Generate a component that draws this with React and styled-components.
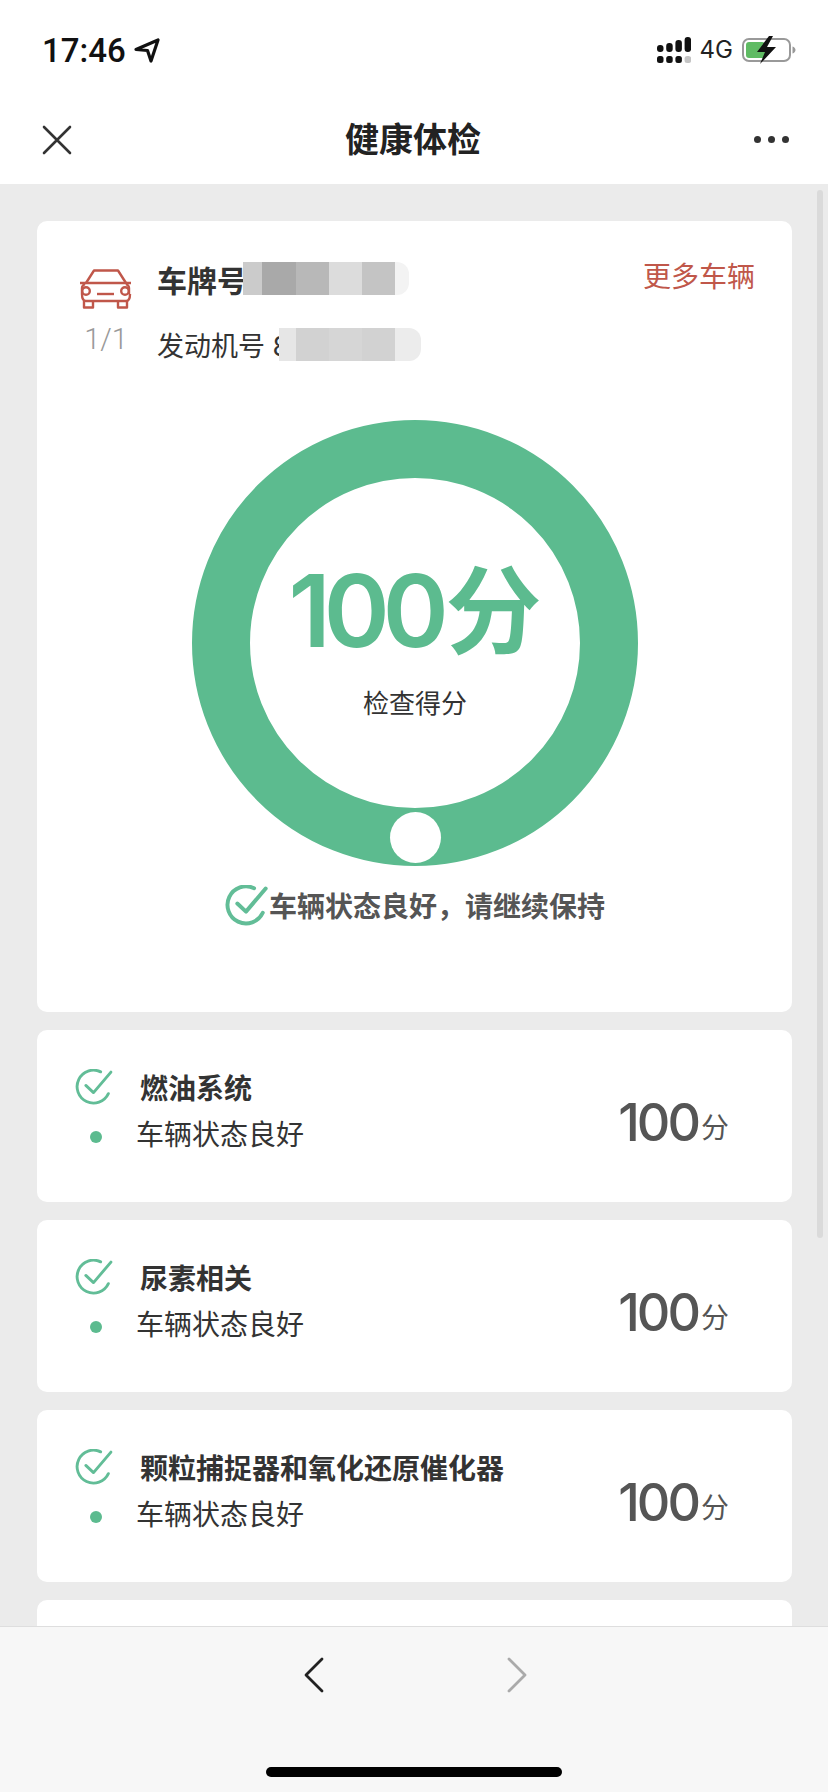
import React from 'react';
import styled, { createGlobalStyle } from 'styled-components';

const GlobalStyle = createGlobalStyle`
  html, body {
    margin: 0;
    padding: 0;
    background: #fff;
  }
  body {
    font-family: Inter, "Noto Sans CJK SC", sans-serif;
  }
`;

const GREEN = '#5cbb8f';
const RED = '#c0574a';

const Page = styled.div`
  width: 828px;
  height: 1792px;
  display: flex;
  flex-direction: column;
  overflow: hidden;
`;

// Статус-бар
const StatusBar = styled.div`
  height: 100px;
  flex: none;
  box-sizing: border-box;
  padding: 0 32px 0 42px;
  display: flex;
  align-items: center;
  justify-content: space-between;
`;

const TimeGroup = styled.div`
  display: flex;
  align-items: center;
  gap: 8px;
`;

const Time = styled.span`
  font-family: Roboto, sans-serif;
  font-size: 33px;
  font-weight: 500;
  line-height: 1;
  color: #111;
`;

const StatusIcons = styled.div`
  display: flex;
  align-items: center;
  gap: 9px;
`;

const NetworkLabel = styled.span`
  font-family: Inter, sans-serif;
  font-size: 24px;
  line-height: 1;
  color: #222;
`;

// Навигация
const NavBar = styled.div`
  height: 84px;
  flex: none;
  box-sizing: border-box;
  padding: 0 39px 5px 42px;
  display: flex;
  align-items: center;
  justify-content: space-between;
`;

const NavTitle = styled.h1`
  margin: -4px 0 0;
  font-size: 34px;
  font-weight: 700;
  color: #222;
`;

const MoreDots = styled.div`
  display: flex;
  gap: 7px;
  i {
    width: 7px;
    height: 7px;
    border-radius: 50%;
    background: #333;
  }
`;

// Контент
const Content = styled.div`
  flex: 1;
  min-height: 0;
  position: relative;
  overflow: hidden;
  background: #ebebeb;
  box-sizing: border-box;
  padding: 37px 36px 0 37px;
  display: flex;
  flex-direction: column;
  gap: 18px;
`;

const ScrollThumb = styled.div`
  position: absolute;
  top: 6px;
  right: 5px;
  width: 6px;
  height: 1048px;
  border-radius: 3px;
  background: #dadada;
`;

const SummaryCard = styled.section`
  flex: none;
  height: 791px;
  border-radius: 10px;
  background: #fff;
  box-sizing: border-box;
  padding: 41px 37px 0 43px;
  display: flex;
  flex-direction: column;
`;

const VehicleHead = styled.div`
  display: flex;
  align-items: flex-start;
`;

const VehicleSide = styled.div`
  width: 77px;
  flex: none;
  padding-top: 7px;
  display: flex;
  flex-direction: column;
  gap: 16px;
`;

const PageCount = styled.span`
  width: 52px;
  text-align: center;
  font-family: Roboto, sans-serif;
  font-size: 29px;
  font-weight: 300;
  line-height: 28px;
  color: #999;
`;

const VehicleInfo = styled.div`
  flex: 1;
  display: flex;
  flex-direction: column;
  gap: 33px;
`;

const InfoLine = styled.div`
  height: 33px;
  display: flex;
  align-items: center;
`;

const PlateLabel = styled.span`
  font-size: 30px;
  font-weight: 700;
  color: #333;
  white-space: nowrap;
`;

const EngineLabel = styled.span`
  font-size: 27px;
  color: #333;
  white-space: nowrap;
`;

const Mask = styled.div`
  display: flex;
  height: 33px;
  margin-left: ${(p) => p.$shift}px;
`;

const MaskCell = styled.div`
  height: 100%;
  width: ${(p) => p.$w}px;
  background: ${(p) => p.$c};
  &:last-child {
    border-radius: 0 12px 12px 0;
  }
`;

const MoreLink = styled.a`
  flex: none;
  font-size: 28px;
  line-height: 30px;
  color: ${RED};
`;

const GaugeWrap = styled.div`
  margin: 59px 0 0 112px;
  width: 446px;
  height: 446px;
  position: relative;
  box-sizing: border-box;
  border: 58px solid ${GREEN};
  border-radius: 50%;
  display: flex;
  flex-direction: column;
  align-items: center;
`;

const GaugeKnob = styled.div`
  position: absolute;
  left: 50%;
  bottom: -55px;
  width: 51px;
  height: 51px;
  margin-left: -25.5px;
  border-radius: 50%;
  background: #fff;
`;

const Score = styled.div`
  margin-top: 85px;
  display: flex;
  align-items: center;
  height: 96px;
  color: ${GREEN};
  font-weight: 700;
`;

const ScoreNumber = styled.span`
  font-family: Inter, sans-serif;
  font-size: 100px;
  font-weight: 600;
  letter-spacing: -7px;
  line-height: 1;
`;

const ScoreUnit = styled.span`
  font-size: 96px;
  line-height: 1;
  margin-left: 4px;
`;

const ScoreCaption = styled.div`
  margin-top: 27px;
  font-size: 26px;
  line-height: 36px;
  color: #333;
`;

const Verdict = styled.div`
  margin: 19px 0 0 144px;
  display: flex;
  align-items: center;
  gap: 1px;
  font-size: 28px;
  font-weight: 700;
  color: #555;
`;

const ItemCard = styled.section`
  flex: none;
  height: 172px;
  border-radius: 10px;
  background: #fff;
  box-sizing: border-box;
  padding: 34px 63px 0 37px;
  display: flex;
  justify-content: space-between;
`;

const ItemBody = styled.div`
  display: grid;
  grid-template-columns: 62px auto;
  grid-auto-rows: 46px;
  align-items: center;
`;

const ItemTitle = styled.div`
  margin-left: 4px;
  font-size: 28px;
  font-weight: 700;
  color: #333;
  white-space: nowrap;
`;

const ItemDot = styled.i`
  display: block;
  margin: 8px 0 0 16px;
  width: 12px;
  height: 12px;
  border-radius: 50%;
  background: ${GREEN};
`;

const ItemText = styled.div`
  font-size: 28px;
  color: #333;
  white-space: nowrap;
`;

const ItemScore = styled.div`
  display: flex;
  align-items: flex-end;
  gap: 3px;
  margin-top: 34px;
  height: 50px;
  color: #555;
`;

const ItemNumber = styled.span`
  font-family: Inter, sans-serif;
  font-size: 52px;
  font-weight: 500;
  letter-spacing: -3px;
  line-height: 50px;
`;

const ItemUnit = styled.span`
  font-size: 28px;
  line-height: 40px;
`;

// Нижняя панель
const Footer = styled.footer`
  height: 166px;
  flex: none;
  background: #f7f7f7;
  border-top: 1px solid #dedede;
  box-sizing: border-box;
  display: flex;
  flex-direction: column;
  align-items: center;
`;

const FooterNav = styled.div`
  margin-top: 30px;
  margin-left: 2px;
  display: flex;
  gap: 183px;
`;

const HomeBar = styled.div`
  margin-top: 74px;
  width: 296px;
  height: 10px;
  border-radius: 5px;
  background: #000;
`;

const LocationIcon = () => (
  <svg width="26" height="25" viewBox="0 0 26 25" fill="none">
    <path d="M2 11.5 24 2 17 23 13.5 12.5Z" stroke="#111" strokeWidth="3.2" strokeLinejoin="round" />
  </svg>
);

const SignalIcon = () => {
  const tops = [8, 6, 3, 0];
  return (
    <svg width="34" height="26" viewBox="0 0 34 26">
      {tops.map((top, i) => (
        <g key={i}>
          <rect x={i * 9.2} y={top} width="6.5" height={15 - top} rx="3" fill="#111" />
          <rect x={i * 9.2} y="19" width="6.5" height="7" rx="2.5" fill={i === 3 ? '#c4c4c4' : '#111'} />
        </g>
      ))}
    </svg>
  );
};

const BatteryIcon = () => (
  <svg width="54" height="28" viewBox="0 0 54 28" fill="none">
    <rect x="1" y="3" width="47" height="22" rx="6" stroke="#999" strokeWidth="2" />
    <rect x="4" y="6" width="19" height="16" rx="3" fill="#5fbb63" />
    <path d="M50.500 10.500c2 .6 3 2 3 3.500s-1 2.900-3 3.500Z" fill="#999" />
    <path d="M27 0 15 16h8l-5 12 16-17h-9l6-11Z" fill="#111" />
  </svg>
);

const CloseIcon = () => (
  <svg width="30" height="30" viewBox="0 0 30 30" fill="none">
    <path d="M2 2 28 28M28 2 2 28" stroke="#333" strokeWidth="2.600" strokeLinecap="round" />
  </svg>
);

const CarIcon = () => (
  <svg width="52" height="40" viewBox="0 0 52 40" fill="none" stroke={RED} strokeWidth="2.400" strokeLinejoin="round">
    <path d="M6 14 14 1.500H38L46 14" />
    <path d="M0 14H51" />
    <path d="M2 25V19c0-1.500 1-3 3-4M49 25V19c0-1.500-1-3-3-4M2 25c0 4 1 7 4 7H46c3 0 4-3 4-7" />
    <circle cx="6" cy="22" r="3.800" />
    <circle cx="45" cy="22" r="3.800" />
    <path d="M17 25H34" />
    <path d="M4 32V38.500H13V32M38 32V38.500H47V32" />
  </svg>
);

const CheckIcon = ({ size, weight }) => (
  <svg width={size} height={(size * 35) / 38} viewBox="0 0 38 35" fill="none" stroke="#62bd97" strokeWidth={weight} strokeLinecap="round" strokeLinejoin="round">
    <path d="M26 2.800A16 16 0 1 0 33.500 24" />
    <path d="M11.500 16 19 23 36 3" />
  </svg>
);

const ChevronIcon = ({ color, flip }) => (
  <svg width="20" height="36" viewBox="0 0 20 36" fill="none">
    <path d={flip ? 'M2 2 18 18 2 34' : 'M18 2 2 18 18 34'} stroke={color} strokeWidth="2.800" strokeLinecap="round" strokeLinejoin="round" />
  </svg>
);

const plateCells = [
  [19, '#cbcbcb'], [34, '#a9a9a9'], [33, '#b8b8b8'], [33, '#dcdcdc'], [33, '#c4c4c4'], [14, '#f3f3f3'],
];
const engineCells = [
  [17, '#e6e6e6'], [33, '#d2d2d2'], [33, '#d6d6d6'], [33, '#d2d2d2'], [26, '#ececec'],
];

const items = ['燃油系统', '尿素相关', '颗粒捕捉器和氧化还原催化器'];

const App = () => {
  return (
    <Page>
      <GlobalStyle />
      <StatusBar>
        <TimeGroup>
          <Time>17:46</Time>
          <LocationIcon />
        </TimeGroup>
        <StatusIcons>
          <SignalIcon />
          <NetworkLabel>4G</NetworkLabel>
          <BatteryIcon />
        </StatusIcons>
      </StatusBar>

      <NavBar>
        <CloseIcon />
        <NavTitle>健康体检</NavTitle>
        <MoreDots>
          <i />
          <i />
          <i />
        </MoreDots>
      </NavBar>

      <Content>
        <ScrollThumb />
        <SummaryCard>
          <VehicleHead>
            <VehicleSide>
              <CarIcon />
              <PageCount>1/1</PageCount>
            </VehicleSide>
            <VehicleInfo>
              <InfoLine>
                <PlateLabel>车牌号</PlateLabel>
                <Mask $shift={-4}>
                  {plateCells.map(([w, c], i) => (
                    <MaskCell key={i} $w={w} $c={c} />
                  ))}
                </Mask>
              </InfoLine>
              <InfoLine>
                <EngineLabel>发动机号 8</EngineLabel>
                <Mask $shift={-10}>
                  {engineCells.map(([w, c], i) => (
                    <MaskCell key={i} $w={w} $c={c} />
                  ))}
                </Mask>
              </InfoLine>
            </VehicleInfo>
            <MoreLink>更多车辆</MoreLink>
          </VehicleHead>

          <GaugeWrap>
            <Score>
              <ScoreNumber>100</ScoreNumber>
              <ScoreUnit>分</ScoreUnit>
            </Score>
            <ScoreCaption>检查得分</ScoreCaption>
            <GaugeKnob />
          </GaugeWrap>

          <Verdict>
            <CheckIcon size={44} weight={3.4} />
            车辆状态良好，请继续保持
          </Verdict>
        </SummaryCard>

        {items.map((title) => (
          <ItemCard key={title}>
            <ItemBody>
              <CheckIcon size={39} weight={2.8} />
              <ItemTitle>{title}</ItemTitle>
              <ItemDot />
              <ItemText>车辆状态良好</ItemText>
            </ItemBody>
            <ItemScore>
              <ItemNumber>100</ItemNumber>
              <ItemUnit>分</ItemUnit>
            </ItemScore>
          </ItemCard>
        ))}
        <ItemCard />
      </Content>

      <Footer>
        <FooterNav>
          <ChevronIcon color="#222" />
          <ChevronIcon color="#aaa" flip />
        </FooterNav>
        <HomeBar />
      </Footer>
    </Page>
  );
};

export default App;
